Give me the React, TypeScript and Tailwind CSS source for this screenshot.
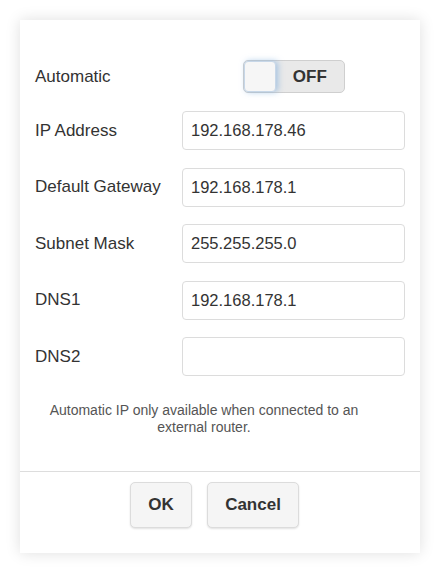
import { useState } from "react";

const fields = [
  { label: "IP Address", value: "192.168.178.46" },
  { label: "Default Gateway", value: "192.168.178.1" },
  { label: "Subnet Mask", value: "255.255.255.0" },
  { label: "DNS1", value: "192.168.178.1" },
  { label: "DNS2", value: "" },
];

function Toggle({ on, onChange }: { on: boolean; onChange: (v: boolean) => void }) {
  return (
    <button
      type="button"
      onClick={() => onChange(!on)}
      className="relative flex h-[33px] w-[102px] items-center rounded-[5px] border border-[#cfcfcf] bg-[#e9e9e9] p-0"
    >
      <span className="absolute left-0 top-0 h-[31px] w-[32px] rounded-[4px] border border-[#c7d7e8] bg-[#f6f6f6] shadow-[2px_0_6px_rgba(120,170,220,0.6)]" />
      <span className="ml-[32px] flex-1 text-center text-[17px] font-bold text-[#333]">
        {on ? "ON" : "OFF"}
      </span>
    </button>
  );
}

export default function App() {
  const [auto, setAuto] = useState(false);

  return (
    <div className="min-h-[573px] bg-white p-5 font-['Liberation_Sans',Arial,sans-serif]">
      <div className="w-[400px] bg-white shadow-[0_0_14px_rgba(0,0,0,0.13)]">
        <div className="px-[15px] pt-10">
          <div className="mb-[18px] flex h-[33px] items-center">
            <span className="w-[148px] text-[17px] text-[#333]">Automatic</span>
            <div className="flex w-[223px] justify-center">
              <Toggle on={auto} onChange={setAuto} />
            </div>
          </div>
          <div className="flex flex-col gap-[17.5px]">
            {fields.map((f) => (
              <div key={f.label} className="flex items-center">
                <span className="w-[148px] text-[17px] text-[#333]">{f.label}</span>
                <input
                  defaultValue={f.value}
                  className="h-[39px] w-[223px] rounded-[4px] border border-[#dcdcdc] px-2 text-[16.5px] text-[#333] outline-none"
                />
              </div>
            ))}
          </div>
        </div>
        <p className="mt-[26px] pl-[15px] pr-[47px] text-center text-[14px] leading-[17px] text-[#555]">
          Automatic IP only available when connected to an external router.
        </p>
        <div className="mt-[35px] border-t border-[#dddddd]" />
        <div className="flex justify-center gap-[15px] pb-[25px] pr-[11px] pt-[10px]">
          <button className="h-[46px] w-[62px] rounded-[5px] border border-[#dcdcdc] bg-[#f5f5f5] text-[17px] font-bold text-[#333] shadow-[0_1px_2px_rgba(0,0,0,0.12)]">
            OK
          </button>
          <button className="h-[46px] w-[92px] rounded-[5px] border border-[#dcdcdc] bg-[#f5f5f5] text-[17px] font-bold text-[#333] shadow-[0_1px_2px_rgba(0,0,0,0.12)]">
            Cancel
          </button>
        </div>
      </div>
    </div>
  );
}
